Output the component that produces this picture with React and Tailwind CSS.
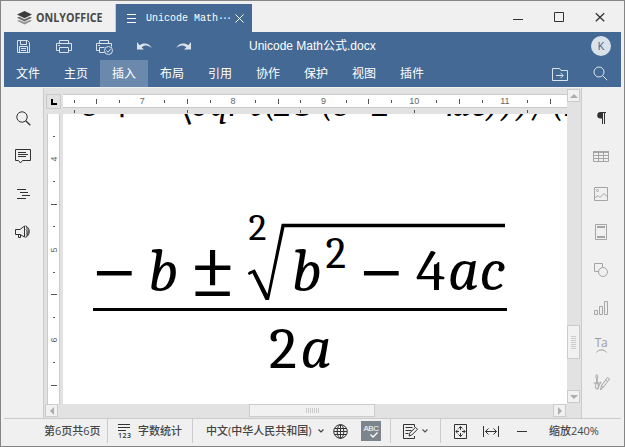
import React from "react";

const ui = "font-['Liberation_Sans','Noto_Sans_CJK_SC',sans-serif]";
const menuTabs = ["文件", "主页", "插入", "布局", "引用", "协作", "保护", "视图", "插件"];
const hMarks = ["s", "l", "s", "7", "s", "l", "s", "8", "s", "l", "s", "9", "s", "l", "s", "10", "s", "l", "s", "11", "s", "l"];
const vMarks = ["s", "4", "s", "l", "s", "5", "s", "l", "s", "6", "s", "l"];

function Icon({ w, h, className = "", children }) {
  return (
    <svg width={w} height={h} viewBox={`0 0 ${w} ${h}`} fill="none" stroke="currentColor" strokeWidth="1" className={`block shrink-0 ${className}`}>
      {children}
    </svg>
  );
}

function TitleBar() {
  return (
    <div className="flex h-[28px] shrink-0">
      <div className="flex w-[112px] items-center border-r border-[#cbcbcb] pl-[13px]">
        <Icon w={15} h={14} className="text-[#555]">
          <path d="M0 9.8 7.5 13.6 15 9.8 12.8 8.9 7.5 11.3 2.2 8.9Z" fill="#929292" stroke="none" />
          <path d="M0 6.7 7.5 10.4 15 6.7 12.8 5.8 7.5 8.2 2.2 5.8Z" fill="#6b6b6b" stroke="none" />
          <path d="M0 3.6 7.5 0 15 3.6 7.5 7.3Z" fill="#3c3c3c" stroke="none" />
        </Icon>
        <svg width="70" height="20" className="ml-[3px] block shrink-0">
          <text x="1" y="14" textLength="66.5" lengthAdjust="spacingAndGlyphs" fontSize="12" fontWeight="700" fill="#484848" fontFamily="'Open Sans', sans-serif">ONLYOFFICE</text>
        </svg>
      </div>
      <div className="flex w-[136px] items-center bg-[#446995] pl-[11px] text-white">
        <Icon w={9} h={9}><path d="M0 .5H9M0 4.5H9M0 8.5H9" /></Icon>
        <div className="ml-[10px] mt-[1px] w-[89px] whitespace-pre font-['Liberation_Mono',monospace] text-[10px] leading-[14px]">
          Unicode Math<span className="tracking-[-2px]">···</span>
        </div>
        <Icon w={9} h={9}><path d="M.5.5 8.5 8.5M8.5.5.5 8.5" /></Icon>
      </div>
      <div className="flex flex-1 items-start justify-end pr-[16px] pt-[8px] text-[#333]">
        <Icon w={10} h={10} className="mr-[31px]"><path d="M0 7.5H10" /></Icon>
        <Icon w={10} h={10} className="mr-[31px]"><path d="M.5.5h9v9h-9z" /></Icon>
        <Icon w={10} h={10}><path d="M.8 1.2 9.2 9.2M9.2 1.2.8 9.2" strokeWidth="1.3" /></Icon>
      </div>
    </div>
  );
}

function Header() {
  return (
    <div className="h-[55px] shrink-0 bg-[#446995] text-white">
      <div className="flex h-[28px] items-center pl-[13px] pr-[10px] text-[#dbe3ec]">
        <Icon w={13} h={13}><path d="M.5.5h10l2 2v10H.5zM3.5.5v4h6v-4M2.5 12.5v-6h8v6M4 8.5h5M4 10.5h5" /></Icon>
        <Icon w={16} h={13} className="ml-[26px]"><path d="M3.5 3.5v-3h9v3M3.5 10.5h-3v-7h15v7h-3M3.5 7.5h9v5h-9zM2 5.5h2" /></Icon>
        <Icon w={18} h={15} className="ml-[24px] mt-[2px]"><path d="M3.5 3.5v-3h9v3M3.5 10.5h-3v-7h15v3M3.5 12.5v-5h5M3.5 12.5h5M2 5.5h2" /><circle cx="12.5" cy="10.5" r="4" /><path d="M10.5 10.5 12 12.2 14.8 9" /></Icon>
        <Icon w={15} h={8} className="ml-[23px]"><path d="M0 0V7.5H7L4.6 5.3C7.6 2.7 11 2.7 14.8 6 12 .8 6.5.2 2.6 3.2Z" fill="currentColor" stroke="none" /></Icon>
        <Icon w={15} h={8} className="ml-[24px]"><path d="M15 0V7.5H8L10.4 5.3C7.4 2.7 4 2.7.2 6 3 .8 8.5.2 12.4 3.2Z" fill="currentColor" stroke="none" /></Icon>
        <span className="ml-[58px] whitespace-nowrap text-[12px] leading-[16px] text-white">Unicode Math公式.docx</span>
        <span className="ml-auto flex size-[20px] items-center justify-center rounded-full bg-[#dae2e9] text-[10px] text-[#446995]">K</span>
      </div>
      <div className="flex h-[27px] items-center">
        {menuTabs.map((t) => (
          <div key={t} className={`flex h-full w-[48px] items-center justify-center text-[12px] ${t === "插入" ? "bg-[#6b89ad]" : ""}`}>{t}</div>
        ))}
        <div className="ml-auto flex items-center pr-[13px] text-[#dbe3ec]">
          <Icon w={16} h={13} className="mr-[25px] mt-[1px]"><path d="M.5 12.5V.5h7l1.5 2h6.5v10zM4 7.5h7M8.5 4.8l2.7 2.7-2.7 2.7" /></Icon>
          <Icon w={15} h={15}><circle cx="6" cy="6" r="5" /><path d="m9.6 9.6 4.6 4.6" /></Icon>
        </div>
      </div>
    </div>
  );
}

function LeftBar() {
  return (
    <div className="flex w-[39px] shrink-0 flex-col items-center pr-px pt-[23px] text-[#333]">
      <Icon w={15} h={15}><circle cx="6" cy="6" r="5.2" /><path d="m9.7 9.7 4.6 4.6" strokeWidth="1.3" /></Icon>
      <Icon w={16} h={15} className="mt-[23px]"><path d="M.5.5h15v11h-8l-2 2.5-2-2.5h-3zM3 3.5h8M3 5.5h10M3 7.5h8" /></Icon>
      <Icon w={13} h={10} className="mt-[25px] ml-[1px]"><path d="M0 .5h9M3 3.5h8M5 6.5h8M0 9.5h9" /></Icon>
      <Icon w={16} h={14} className="mt-[26px]"><path d="M.5 4.5H5L9.5 1v11L5 9.5H.5zM3.5 9.5v3h2v-3M11 4.5c1.5 1.5 1.5 3.5 0 5M11 2.5c3 2 3 6 0 9M10.5.8c5 2.2 5 9.2 0 11.7" /></Icon>
    </div>
  );
}

function RightBar() {
  return (
    <div className="flex w-[40px] shrink-0 flex-col items-center border-l border-[#cbcbcb] pr-px pt-[24px] text-[#a5a5a5]">
      <Icon w={9} h={12} className="text-[#333]"><path d="M9 .5H4M5.5.5V12M7.5.5V12" /><path d="M5 0H3.5a3.2 3.2 0 0 0 0 6.5H5z" fill="currentColor" stroke="none" /></Icon>
      <Icon w={16} h={11} className="mt-[27px]"><path d="M.5 1v9.5h15V1M0 1h16M.5 4.5h15M.5 7.5h15M5.5 1v9.5M10.5 1v9.5" /><path d="M0 1h16" strokeWidth="2" /></Icon>
      <Icon w={14} h={14} className="mt-[25px]"><path d="M.5.5h13v13H.5zM1 11l3-2.5 2 2L10 6.5l3.5 3.5" /><circle cx="3.5" cy="3.5" r="1" /></Icon>
      <Icon w={12} h={16} className="mt-[23px]"><path d="M.5.5h11v15H.5z" /><path d="M2 3h8M2 13h8" strokeWidth="2" /></Icon>
      <Icon w={14} h={14} className="mt-[23px]"><path d="M4.5 8.5h-4v-8h8v3.5" /><circle cx="9" cy="9" r="4.5" /></Icon>
      <Icon w={14} h={14} className="mt-[24px]"><path d="M.5 9.5h3v4h-3zM5.5 5.5h3v8h-3zM10.5.5h3v13h-3z" /></Icon>
      <div className="mt-[21px] flex h-[18px] flex-col items-center font-['Open_Sans',sans-serif] text-[12px] font-medium leading-[14px] tracking-[-0.5px] text-[#9c9c9c]">
        <span className="h-[13px]">Ta</span>
        <Icon w={11} h={4}><path d="M.5 3.5C2.5 0 8.5 0 10.5 3.5" /></Icon>
      </div>
      <Icon w={17} h={17} className="mt-[20px]"><path d="M.5 9h7M3.5 15c3 .5 2-2 1.5-5S1.5 1.5 3.5.8c2-.5 1 4-.5 9s0 6 2 4l3-6M7.5 16l1-4.5 6-8 2 1.5-6 8zM8.500 11.500l2 1.500M12.500 6l2 1.500" /></Icon>
    </div>
  );
}

function ScrollButton({ d }) {
  return (
    <div className="flex size-[13px] shrink-0 items-center justify-center border border-[#cbcbcb] bg-[#f1f1f1] text-[#adadad]">
      <Icon w={8} h={8}><path d={d} fill="currentColor" stroke="none" /></Icon>
    </div>
  );
}

function Rulers() {
  return (
    <div className="flex h-[26px] shrink-0 pt-[6px]">
      <div className="ml-[2px] mr-[2px] flex size-[15px] items-center justify-center border border-[#cbcbcb]">
        <Icon w={6} h={6} className="text-black"><path d="M1 0v5h5" strokeWidth="2" /></Icon>
      </div>
      <div className="flex-1">
        <div className="flex h-[14px] items-center overflow-hidden border-y border-[#cbcbcb] bg-white">
          {hMarks.map((m, i) => (
            <div key={i} className="flex w-[22.67px] shrink-0 items-center justify-center font-['Liberation_Sans',sans-serif] text-[9px] leading-[12px] text-[#666]">
              {m === "s" ? <i className="h-[3px] w-px bg-[#555]" /> : m === "l" ? <i className="h-[5px] w-px bg-[#555]" /> : m}
            </div>
          ))}
        </div>
        <div className="flex gap-[112.2px] pl-[11px] pt-[2px]">
          {[0, 1, 2, 3, 4].map((i) => <i key={i} className="h-[3px] w-px shrink-0 bg-[#555]" />)}
        </div>
      </div>
    </div>
  );
}

// Page canvas: a clipped line of linear math followed by the built-up quadratic formula.
function Formula() {
  const it = { fontStyle: "italic" };
  return (
    <svg width="504" height="290" viewBox="63 114 504 290" className="block bg-white" fontFamily="Cambria, 'Liberation Serif', serif" fill="#000">
      <text x="82" y="116" fontSize="36" style={it}>b</text>
      <text x="111" y="119.5" fontSize="40" stroke="#000" strokeWidth="0.4">+</text>
      <text x="150" y="116" fontSize="36">−</text>
      <text x="176" y="120" fontSize="36" stroke="#000" strokeWidth="0.6">\</text>
      <text y="116" fontSize="36" style={it} x="194 210 228 250 263 274 292 320 333 352 372 405 438 452 471 486 501 516 531 551 565">{"sqrt(2&(b^2−4ac)))/(2"}</text>
      <text x="90" y="298" fontSize="87">−</text>
      <text x="148" y="290.5" fontSize="61" style={it}>b</text>
      <text x="189" y="297.5" fontSize="86">±</text>
      <text x="248.5" y="240" fontSize="38">2</text>
      <text x="291.5" y="290.5" fontSize="61" style={it}>b</text>
      <text x="325.5" y="268" fontSize="43.5">2</text>
      <text x="357" y="298" fontSize="87">−</text>
      <text x="416" y="290" fontSize="59.5">4</text>
      <text x="448" y="290" fontSize="61" style={it}>a</text>
      <text x="479.5" y="290" fontSize="61" style={it}>c</text>
      <text x="269" y="368" fontSize="59">2</text>
      <text x="300.5" y="368" fontSize="61" style={it}>a</text>
      <path d="M247.8 273.3 249 271.8 254.8 269.3 267.5 294 281.7 223.8H505V227.2H284.5L269 300H265.5L252.5 273.2 249 275Z" />
      <path d="M93 308h414v3H93z" />
    </svg>
  );
}

function Canvas() {
  return (
    <div className="flex min-w-0 flex-1 border-l border-[#cbcbcb] bg-[#e2e2e2]">
      <div className="flex w-[523px] shrink-0 flex-col">
        <Rulers />
        <div className="flex h-[290px] shrink-0">
          <div className="ml-[3px] mr-[3px] flex w-[13px] flex-col border-x border-[#cbcbcb] bg-white pt-[11px]">
            {vMarks.map((m, i) => (
              <div key={i} className="flex h-[22.67px] shrink-0 items-center justify-center font-['Liberation_Sans',sans-serif] text-[9px] leading-[12px] text-[#666]">
                {m === "s" ? <i className="h-px w-[2px] bg-[#555]" /> : m === "l" ? <i className="h-px w-[6px] bg-[#555]" /> : <span className="-rotate-90">{m}</span>}
              </div>
            ))}
          </div>
          <Formula />
        </div>
        <div className="flex h-[14px] pl-px">
          <ScrollButton d="M6 0v8L2 4z" />
          <div className="ml-[191px] mr-auto flex h-[13px] w-[126px] items-center justify-center gap-px border border-[#cbcbcb] bg-[#f1f1f1]">
            {[0, 1, 2, 3, 4, 5, 6].map((i) => <i key={i} className="h-[5px] w-px bg-[#cbcbcb]" />)}
          </div>
          <ScrollButton d="M2 0v8l4-4z" />
          <div className="w-px shrink-0" />
        </div>
      </div>
      <div className="flex w-[13px] flex-col pt-px">
        <ScrollButton d="M0 6h8L4 2z" />
        <div className="mt-[223px] flex h-[34px] w-[13px] flex-col items-center justify-center gap-px border border-[#cbcbcb] bg-[#f1f1f1]">
          {[0, 1, 2, 3, 4, 5, 6].map((i) => <i key={i} className="h-px w-[5px] bg-[#cbcbcb]" />)}
        </div>
        <div className="mt-[31px]"><ScrollButton d="M0 2h8L4 6z" /></div>
      </div>
    </div>
  );
}

function StatusBar() {
  return (
    <div className="flex h-[25px] shrink-0 items-center whitespace-nowrap border-t border-[#cbcbcb] font-['Open_Sans','Noto_Sans_CJK_SC',sans-serif] text-[11px] font-medium leading-[16px] text-[#444]">
      <span className="w-[103px] pl-[40px]">第6页共6页</span>
      <div className="flex h-full w-[85px] items-center border-l border-[#cbcbcb] pl-[10px]">
        <Icon w={13} h={15} className="text-[#333]">
          <path d="M0 .5h12M0 3.5h12M0 6.5h8" />
          <text x="0" y="14" fontSize="7" fontWeight="600" textLength="13" fill="currentColor" stroke="none" fontFamily="'Open Sans', sans-serif">123</text>
        </Icon>
        <span className="ml-[7px]">字数统计</span>
      </div>
      <div className="flex h-full w-[198px] items-center border-l border-[#cbcbcb] pl-[13px]">
        <span className="w-[107px]">中文(中华人民共和国)</span>
        <Icon w={6} h={4} className="ml-[5px]"><path d="m.5.5 2.5 2.5L5.5.5" strokeWidth="1.2" /></Icon>
        <Icon w={15} h={15} className="ml-[9px] text-[#333]"><circle cx="7.5" cy="7.5" r="6.8" /><ellipse cx="7.5" cy="7.5" rx="3.3" ry="6.8" /><path d="M7.5.7v13.6M1 7.5h13M1.8 4.5h11.4M1.8 10.5h11.4" /></Icon>
        <div className="ml-[13px] flex size-[20px] shrink-0 flex-col items-center bg-[#7d858c] text-white">
          <span className="mt-[3px] h-[8px] font-['Liberation_Sans',sans-serif] text-[8px] leading-[9px] tracking-[-0.5px]">ABC</span>
          <Icon w={8} h={6} className="ml-[5px]"><path d="M.5 2.5 3 5 7.5.5" strokeWidth="1.4" /></Icon>
        </div>
      </div>
      <div className="flex h-full w-[50px] items-center border-l border-[#cbcbcb] pl-[12px] text-[#333]">
        <Icon w={15} h={15}><path d="M11.5 3V.5H.5v14h11V12M2.5 3.5h7M2.5 6.5h6M2.5 9.5h3M6 12l.8-3L12.5 3.3l2 2L8.8 11z" /></Icon>
        <Icon w={6} h={4} className="ml-[4px] text-[#555]"><path d="m.5.5 2.5 2.5L5.5.5" strokeWidth="1.2" /></Icon>
      </div>
      <div className="flex h-full flex-1 items-center border-l border-[#cbcbcb] pl-[13px] text-[#333]">
        <Icon w={13} h={15}><path d="M.5.5h12v14H.5zM6.5 2.5v3.5M4.5 4.5l2-2 2 2M6.5 12.5V9M4.5 10.5l2 2 2-2M2 7.5h3M3.5 5.8 1.8 7.5l1.7 1.7M11 7.5H8M9.5 5.8l1.7 1.7-1.7 1.7" /></Icon>
        <Icon w={16} h={11} className="ml-[16px]"><path d="M.5 0v11M15.5 0v11M2.5 5.5h11M5.5 2.5l-3 3 3 3M10.5 2.5l3 3-3 3" /></Icon>
        <Icon w={10} h={1} className="ml-[18px]"><path d="M0 .5h10" /></Icon>
        <span className="ml-[22px] text-[#444]">缩放240%</span>
      </div>
    </div>
  );
}

export default function App() {
  return (
    <div lang="zh-CN" className={`flex h-[447px] w-[625px] flex-col overflow-hidden border border-[#858585] bg-[#f0f0f0] p-[3px] ${ui}`}>
      <TitleBar />
      <Header />
      <div className="flex h-[331px] shrink-0 pt-px">
        <LeftBar />
        <Canvas />
        <RightBar />
      </div>
      <StatusBar />
    </div>
  );
}
